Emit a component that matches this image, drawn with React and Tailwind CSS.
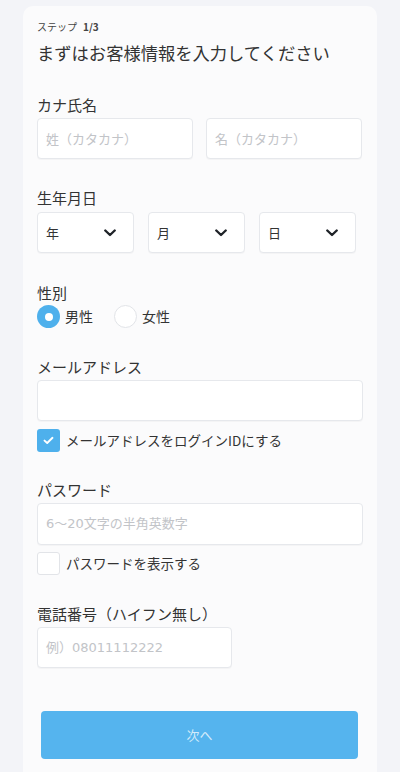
import React, { useState } from "react";

const font = { fontFamily: '"Noto Sans CJK JP", "Noto Sans", sans-serif' };
const phFont = { fontFamily: '"DejaVu Sans", "Noto Sans CJK JP", sans-serif' };

const inputBox =
  "h-[41px] bg-white border border-[#e6e8ec] rounded-[4px] shadow-[0_1px_1px_rgba(0,0,0,0.03)] flex items-center px-[8px] text-[13px]";

const Chevron = () => (
  <svg width="12" height="8" viewBox="0 0 12 8" fill="none">
    <path d="M1.3 1.5 L6 6 L10.7 1.5" stroke="#1f2328" strokeWidth="2.4" strokeLinecap="round" strokeLinejoin="round" />
  </svg>
);

const SelectBox = ({ label }) => (
  <div className={`${inputBox} w-[97px] justify-between pr-[17px] text-[#333]`}>
    <span>{label}</span>
    <Chevron />
  </div>
);

const Radio = ({ checked, label, onClick }) => (
  <button onClick={onClick} className="flex items-center gap-[5px]">
    {checked ? (
      <span className="w-[23px] h-[23px] rounded-full bg-[#4eb0ec] flex items-center justify-center">
        <span className="w-[8px] h-[8px] rounded-full bg-white" />
      </span>
    ) : (
      <span className="w-[23px] h-[23px] rounded-full bg-white border border-[#e2e4e8]" />
    )}
    <span className="text-[14px] text-[#333]">{label}</span>
  </button>
);

const Check = ({ checked, label, onClick }) => (
  <button onClick={onClick} className="flex items-center gap-[6px]">
    {checked ? (
      <span className="w-[23px] h-[23px] rounded-[3px] bg-[#4eb0ec] flex items-center justify-center">
        <svg width="11" height="9" viewBox="0 0 11 9" fill="none">
          <path d="M1.5 4.6 L4.2 7 L9.5 1.8" stroke="white" strokeWidth="1.9" strokeLinecap="round" strokeLinejoin="round" />
        </svg>
      </span>
    ) : (
      <span className="w-[23px] h-[23px] rounded-[3px] bg-white border border-[#e2e4e8]" />
    )}
    <span className="text-[13.5px] text-[#333]">{label}</span>
  </button>
);

const Label = ({ children, className = "" }) => (
  <div className={`text-[15px] leading-[22px] text-[#333] ${className}`}>{children}</div>
);

export default function App() {
  const [gender, setGender] = useState("male");
  const [loginId, setLoginId] = useState(true);
  const [showPw, setShowPw] = useState(false);

  return (
    <div className="min-h-[772px] bg-[#f3f4f8] pt-[6px] overflow-hidden" style={font}>
      <div className="mx-[23px] bg-[#fbfbfc] rounded-t-[10px] px-[14px] pt-[14px] pb-[20px]">
        {/* Step */}
        <div className="text-[10px] leading-[14px] text-[#444] flex gap-[6px]">
          <span>ステップ</span>
          <span className="font-bold">1/3</span>
        </div>
        <h1 className="mt-[7px] text-[17.3px] leading-[24px] text-[#333]">
          まずはお客様情報を入力してください
        </h1>

        {/* Kana name */}
        <Label className="mt-[29px]">カナ氏名</Label>
        <div className="mt-[2px] flex gap-[13px]">
          <div className={`${inputBox} w-[156px] text-[#c2c4c8]`}>姓（カタカナ）</div>
          <div className={`${inputBox} w-[156px] text-[#c2c4c8]`}>名（カタカナ）</div>
        </div>

        {/* Birthday */}
        <Label className="mt-[28px]">生年月日</Label>
        <div className="mt-[3px] flex gap-[14px]">
          <SelectBox label="年" />
          <SelectBox label="月" />
          <SelectBox label="日" />
        </div>

        {/* Gender */}
        <Label className="mt-[29px]">性別</Label>
        <div className="mt-[1px] flex gap-[21px]">
          <Radio checked={gender === "male"} label="男性" onClick={() => setGender("male")} />
          <Radio checked={gender === "female"} label="女性" onClick={() => setGender("female")} />
        </div>

        {/* Email */}
        <Label className="mt-[28px]">メールアドレス</Label>
        <div className={`${inputBox} mt-[2px] w-full`} />
        <div className="mt-[8px]">
          <Check checked={loginId} label="メールアドレスをログインIDにする" onClick={() => setLoginId(!loginId)} />
        </div>

        {/* Password */}
        <Label className="mt-[27px]">パスワード</Label>
        <div className={`${inputBox} mt-[2px] w-full h-[42px] text-[#c2c4c8] text-[13.5px]`} style={phFont}>
          6〜20文字の半角英数字
        </div>
        <div className="mt-[7px]">
          <Check checked={showPw} label="パスワードを表示する" onClick={() => setShowPw(!showPw)} />
        </div>

        {/* Phone */}
        <Label className="mt-[28px]">電話番号（ハイフン無し）</Label>
        <div className={`${inputBox} mt-[2px] w-[195px] text-[#c2c4c8] text-[13.5px]`} style={phFont}>
          例）08011112222
        </div>

        <button className="mt-[43px] mx-[4px] w-[317px] h-[48px] rounded-[4px] bg-[#55b4ee] text-[13px] text-[#d4ebfa]">
          次へ
        </button>
      </div>
    </div>
  );
}
